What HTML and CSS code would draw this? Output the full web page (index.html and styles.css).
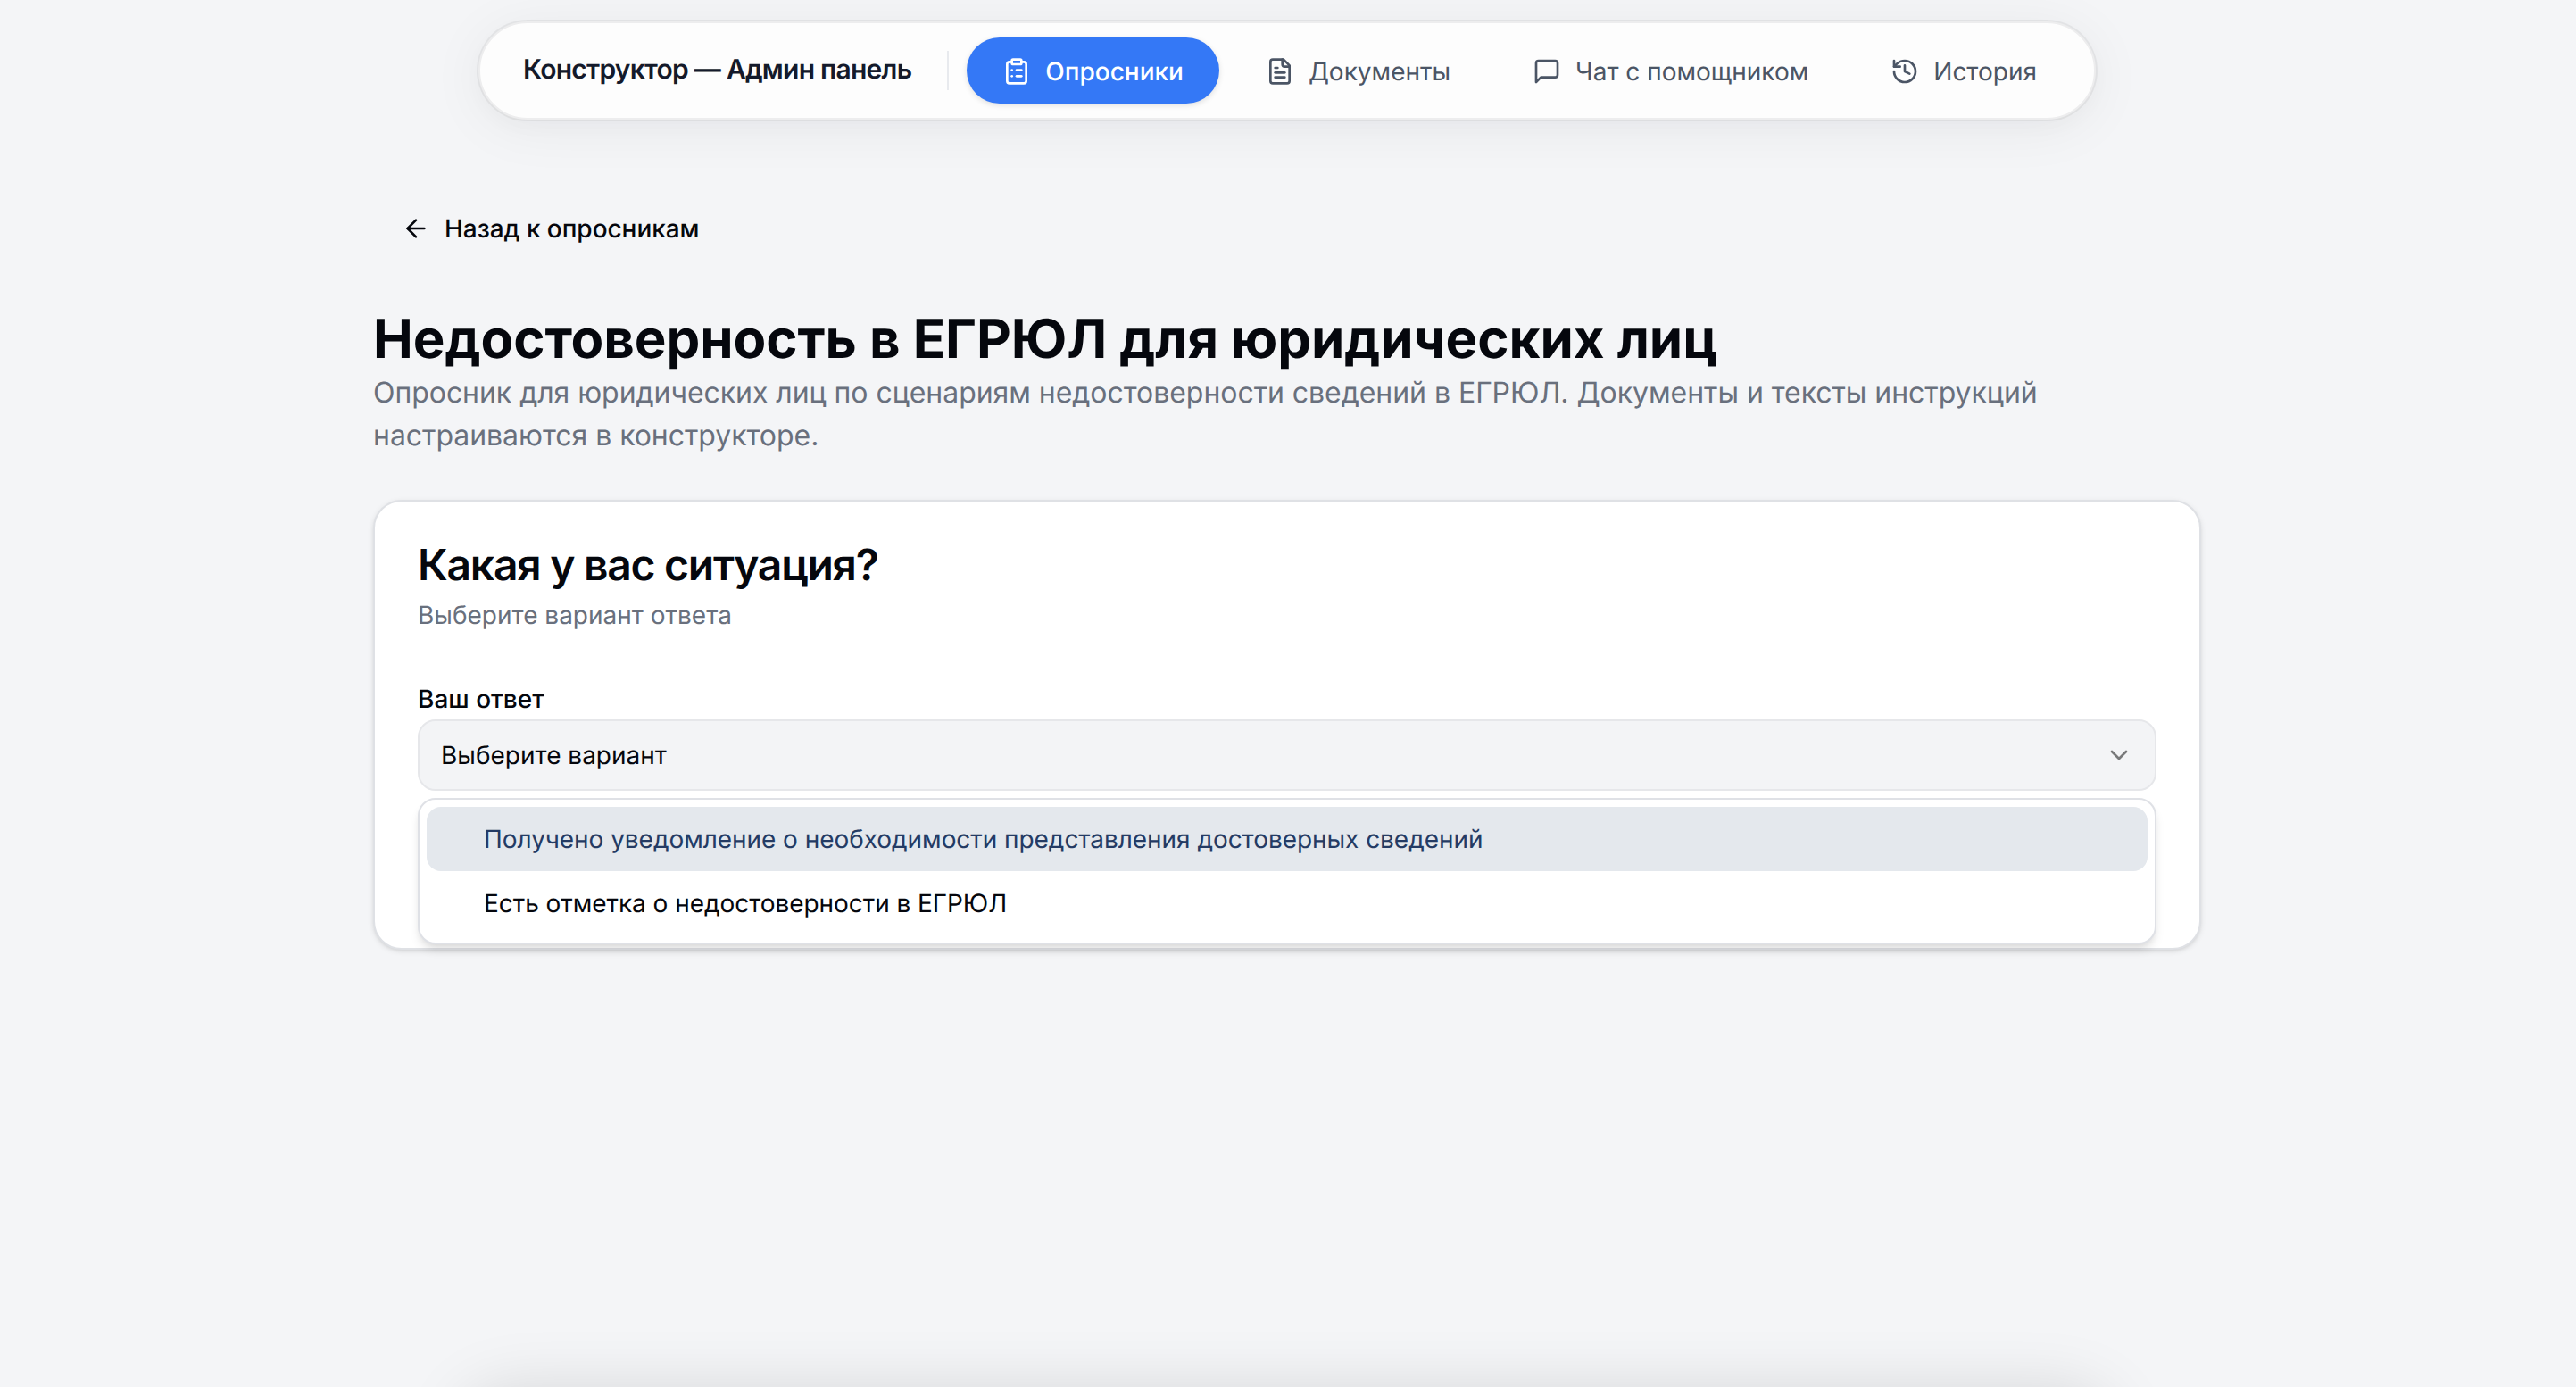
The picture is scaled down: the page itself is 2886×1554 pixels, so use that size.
FILE: index.html
```html
<!DOCTYPE html>
<html lang="ru">
<head>
    <meta charset="UTF-8">
    <title>Конструктор — Админ панель</title>
    <link rel="stylesheet" href="styles.css">
</head>
<body>
<header class="header">
    <nav class="nav">
        <span class="brand">Конструктор — Админ панель</span>
        <a href="#" class="nav-item active">
            <svg class="icon" viewBox="0 0 24 24"><rect width="8" height="4" x="8" y="2" rx="1" ry="1"/><path d="M16 4h2a2 2 0 0 1 2 2v14a2 2 0 0 1-2 2H6a2 2 0 0 1-2-2V6a2 2 0 0 1 2-2h2"/><path d="M12 11h4"/><path d="M12 16h4"/><path d="M8 11h.01"/><path d="M8 16h.01"/></svg>
            <span>Опросники</span>
        </a>
        <a href="#" class="nav-item">
            <svg class="icon" viewBox="0 0 24 24"><path d="M15 2H6a2 2 0 0 0-2 2v16a2 2 0 0 0 2 2h12a2 2 0 0 0 2-2V7Z"/><path d="M14 2v4a2 2 0 0 0 2 2h4"/><path d="M10 9H8"/><path d="M16 13H8"/><path d="M16 17H8"/></svg>
            <span>Документы</span>
        </a>
        <a href="#" class="nav-item">
            <svg class="icon" viewBox="0 0 24 24"><path d="M21 15a2 2 0 0 1-2 2H7l-4 4V5a2 2 0 0 1 2-2h14a2 2 0 0 1 2 2z"/></svg>
            <span>Чат с помощником</span>
        </a>
        <a href="#" class="nav-item">
            <svg class="icon" viewBox="0 0 24 24"><path d="M3 12a9 9 0 1 0 9-9 9.75 9.75 0 0 0-6.74 2.74L3 8"/><path d="M3 3v5h5"/><path d="M12 7v5l4 2"/></svg>
            <span>История</span>
        </a>
    </nav>
</header>

<main class="page">
    <a href="#" class="back">
        <svg class="icon" viewBox="0 0 24 24"><path d="m12 19-7-7 7-7"/><path d="M19 12H5"/></svg>
        <span>Назад к опросникам</span>
    </a>
    <h1 class="title">Недостоверность в ЕГРЮЛ для юридических лиц</h1>
    <p class="lead">Опросник для юридических лиц по сценариям недостоверности сведений в ЕГРЮЛ. Документы и тексты инструкций настраиваются в конструкторе.</p>

    <section class="card">
        <h2 class="card-title">Какая у вас ситуация?</h2>
        <p class="card-text">Выберите вариант ответа</p>
        <div class="field">
            <div class="label-row"><label class="label">Ваш ответ</label></div>
            <div class="select">
                <span>Выберите вариант</span>
                <svg class="icon chevron" viewBox="0 0 24 24"><path d="m6 9 6 6 6-6"/></svg>
            </div>
            <ul class="options">
                <li class="option hover">Получено уведомление о необходимости представления достоверных сведений</li>
                <li class="option">Есть отметка о недостоверности в ЕГРЮЛ</li>
            </ul>
        </div>
    </section>
</main>
<div class="dock"></div>
</body>
</html>
```
FILE: styles.css
```css
*{box-sizing:border-box;}
body,h1,h2,p,ul{margin:0;padding:0;}
body{
    height:1554px;
    position:relative;
    background:#f4f5f7;
    color:#05070d;
    font:32px/48px Inter, "Noto Sans", sans-serif;
    text-rendering:geometricPrecision;
}
ul{list-style:none;}
a{color:inherit;text-decoration:none;}

.icon{
    width:32px;
    height:32px;
    flex:none;
    fill:none;
    stroke:currentColor;
    stroke-width:2;
    stroke-linecap:round;
    stroke-linejoin:round;
}

/* top navigation */
.header{
    display:flex;
    justify-content:center;
    width:2884px;
    padding-top:24px;
}
.nav{
    display:flex;
    align-items:center;
    gap:12px;
    height:110px;
    padding:0 24px 0 48px;
    border:2px solid #ededee;
    border-radius:55px;
    background:#fdfdfd;
    box-shadow:0 0 0 2px rgba(0,0,0,.05), 0 8px 64px rgba(15,23,42,.06), 0 8px 24px rgba(0,0,0,.02);
}
.brand{
    height:44px;
    margin-right:8px;
    padding-right:40px;
    border-right:2px solid #e8eaee;
    color:#141a2b;
    font-size:30px;
    font-weight:600;
    line-height:43px;
    letter-spacing:-0.025em;
    white-space:nowrap;
}
.nav-item{
    display:flex;
    align-items:center;
    gap:16px;
    height:74px;
    padding:1px 40px 0;
    border-radius:37px;
    color:#4b5565;
    font-size:28px;
    line-height:40px;
    white-space:nowrap;
}
.active{
    background:#3478f6;
    color:#fff;
    font-weight:500;
    box-shadow:0 2px 6px rgba(0,0,0,.12);
}

/* content */
.page{
    width:2048px;
    margin:82px 0 0 418px;
}
.back{
    display:inline-flex;
    align-items:center;
    gap:16px;
    height:80px;
    padding:0 32px;
    font-size:28px;
    font-weight:500;
    letter-spacing:-0.04px;
    vertical-align:top;
}
.title{
    margin-top:48px;
    font-size:60px;
    font-weight:700;
    line-height:72px;
    letter-spacing:-0.06px;
}
.lead{
    color:#69707d;
    letter-spacing:-0.045px;
}

.card{
    height:504px;
    margin-top:48px;
    padding:47px 48px 48px;
    border:2px solid #dfe1e5;
    border-radius:32px;
    background:#fff;
    box-shadow:0 2px 6px rgba(0,0,0,.1), 0 2px 4px -2px rgba(0,0,0,.1);
}
.card-title{
    font-size:48px;
    font-weight:600;
    line-height:48px;
    letter-spacing:-0.026em;
}
.card-text{
    margin-top:12px;
    color:#69707d;
    font-size:28px;
    line-height:40px;
}
.field{
    position:relative;
    margin-top:49px;
}
.label-row{height:48px;}
.label{
    font-size:28px;
    font-weight:500;
}
.select{
    display:flex;
    align-items:center;
    justify-content:space-between;
    height:80px;
    padding:0 24px;
    border:2px solid #e6e7ea;
    border-radius:20px;
    background:#f3f4f6;
    font-size:28px;
}
.chevron{
    color:#000;
    opacity:.5;
}
.options{
    position:absolute;
    top:136px;
    left:0;
    right:0;
    padding:8px;
    border:2px solid #dfe1e6;
    border-radius:20px;
    background:#fff;
    box-shadow:0 8px 12px -2px rgba(0,0,0,.1), 0 4px 8px -4px rgba(0,0,0,.1);
}
.option{
    height:72px;
    padding:0 64px;
    border-radius:16px;
    font-size:28px;
    line-height:72px;
    letter-spacing:-0.05px;
}
.hover{
    background:#e4e8ed;
    color:#243b64;
}

/* shade of the bar below the fold */
.dock{
    position:absolute;
    left:0;
    right:0;
    bottom:0;
    height:120px;
    overflow:hidden;
}
.dock::before{
    content:"";
    position:absolute;
    left:516px;
    right:518px;
    top:124px;
    height:110px;
    border-radius:55px;
    box-shadow:0 0 72px rgba(0,0,0,.13);
}
```
